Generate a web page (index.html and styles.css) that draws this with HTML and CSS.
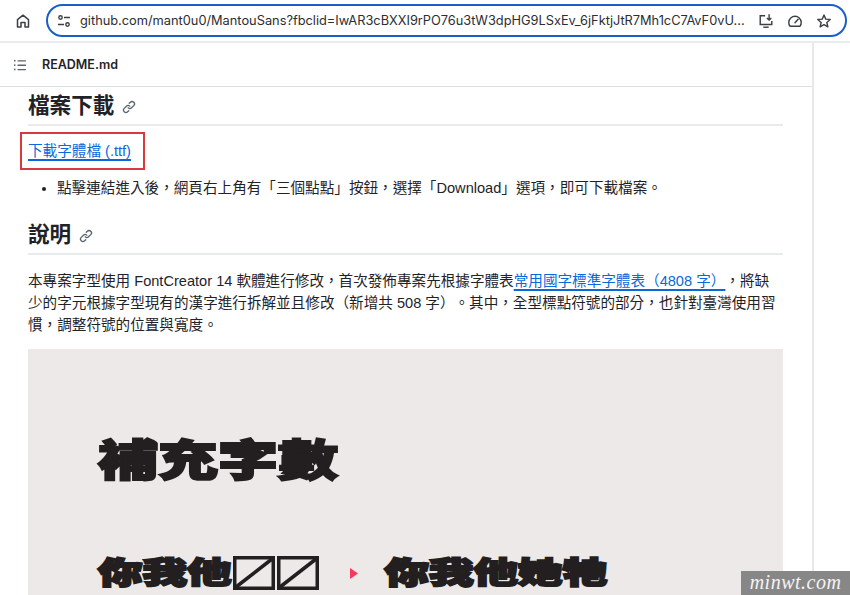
FILE: index.html
```html
<!DOCTYPE html>
<html lang="zh-TW">
<head>
<meta charset="utf-8">
<title>MantouSans</title>
<link rel="stylesheet" href="styles.css">
</head>
<body>
<header class="toolbar">
  <svg class="home" viewBox="0 0 16 16" width="16" height="16"><path d="M2.500 6.600 8 2.200l5.500 4.400V14H10V9.500H6V14H2.500Z" fill="none" stroke="#3c4043" stroke-width="1.500" stroke-linejoin="round"/></svg>
  <div class="omnibox">
    <svg class="tune" viewBox="0 0 16 16" width="16" height="16"><g fill="none" stroke="#3c4043" stroke-width="1.400"><circle cx="4.500" cy="4.500" r="1.700"/><path d="M8 4.500h6M2 11.500h6"/><circle cx="11.500" cy="11.500" r="1.700"/></g></svg>
    <span class="url">github.com/mant0u0/MantouSans?fbclid=IwAR3cBXXI9rPO76u3tW3dpHG9LSxEv_6jFktjJtR7Mh1cC7AvF0vU...</span>
    <svg class="act" viewBox="0 0 18 18" width="16" height="16"><g fill="none" stroke="#3c4043" stroke-width="1.600"><path d="M8 3H2.500v10h13V9"/><path d="M6 16h6"/><path d="M12.500 1.500v6M10 5.500l2.500 2.500L15 5.500"/></g></svg>
    <svg class="act" viewBox="0 0 18 18" width="16" height="16"><g fill="none" stroke="#3c4043" stroke-width="1.600"><path d="M3.500 15A7 7 0 1 1 14.500 15Z" stroke-linejoin="round"/><path d="M9 11l3.500-4" stroke-linecap="round"/></g></svg>
    <svg class="act" viewBox="0 0 18 18" width="16" height="16"><path d="M9 2.300l2 4.600 5 .450-3.800 3.300 1.150 4.900L9 13l-4.350 2.550 1.150-4.900L2 7.350l5-.450Z" fill="none" stroke="#3c4043" stroke-width="1.600" stroke-linejoin="round"/></svg>
  </div>
</header>
<div class="page">
  <main class="readme">
    <div class="readme-head">
      <svg viewBox="0 0 16 16" width="14" height="14"><path fill="#59636e" d="M5.750 2.500h8.500a.75.75 0 0 1 0 1.500h-8.500a.75.75 0 0 1 0-1.500Zm0 5h8.500a.75.75 0 0 1 0 1.500h-8.500a.75.75 0 0 1 0-1.500Zm0 5h8.500a.75.75 0 0 1 0 1.500h-8.500a.75.75 0 0 1 0-1.500ZM2 14a1 1 0 1 1 0-2 1 1 0 0 1 0 2Zm1-6a1 1 0 1 1-2 0 1 1 0 0 1 2 0ZM2 4a1 1 0 1 1 0-2 1 1 0 0 1 0 2Z"/></svg>
      <span class="readme-name">README.md</span>
    </div>
    <article class="body">
      <h2 class="h first">檔案下載 <svg class="anchor" viewBox="0 0 16 16" width="14" height="14"><use href="#link"/></svg></h2>
      <p class="dl"><a class="boxed" href="#">下載字體檔 (.ttf)</a></p>
      <ul class="list"><li>點擊連結進入後，網頁右上角有「三個點點」按鈕，選擇「Download」選項，即可下載檔案。</li></ul>
      <h2 class="h">說明 <svg class="anchor" viewBox="0 0 16 16" width="14" height="14"><use href="#link"/></svg></h2>
      <p class="para">本專案字型使用 FontCreator 14 軟體進行修改，首次發佈專案先根據字體表<a href="#">常用國字標準字體表（4808 字）</a>，將缺少的字元根據字型現有的漢字進行拆解並且修改（新增共 508 字）。其中，全型標點符號的部分，也針對臺灣使用習慣，調整符號的位置與寬度。</p>
      <figure class="poster">
        <div class="poster-title">補充字數</div>
        <div class="poster-row">
          <span class="glyphs">你我他</span>
          <span class="missing"><svg viewBox="0 0 42 34" width="42" height="34"><use href="#tofu"/></svg><svg viewBox="0 0 42 34" width="42" height="34"><use href="#tofu"/></svg></span>
          <svg class="arrow" viewBox="0 0 8 11" width="8" height="11"><path d="M0 0l8 5.500-8 5.500Z" fill="#f43a5f"/></svg>
          <span class="glyphs">你我他她牠</span>
        </div>
      </figure>
    </article>
  </main>
  <aside class="side"></aside>
</div>
<div class="mark">minwt.com</div>
<svg class="defs" width="0" height="0">
  <symbol id="link" viewBox="0 0 16 16"><path fill="#59636e" d="m7.775 3.275 1.250-1.250a3.500 3.500 0 1 1 4.950 4.950l-2.500 2.500a3.500 3.500 0 0 1-4.950 0 .751.751 0 0 1 .018-1.042.751.751 0 0 1 1.042-.018 1.998 1.998 0 0 0 2.830 0l2.500-2.500a2.002 2.002 0 0 0-2.830-2.830l-1.250 1.250a.751.751 0 0 1-1.042-.018.751.751 0 0 1-.018-1.042Zm-4.690 9.640a1.998 1.998 0 0 0 2.830 0l1.250-1.250a.751.751 0 0 1 1.042.018.751.751 0 0 1 .018 1.042l-1.250 1.250a3.500 3.500 0 1 1-4.950-4.950l2.500-2.500a3.500 3.500 0 0 1 4.950 0 .751.751 0 0 1-.018 1.042.751.751 0 0 1-1.042.018 1.998 1.998 0 0 0-2.830 0l-2.500 2.500a1.998 1.998 0 0 0 0 2.830Z"/></symbol>
  <symbol id="tofu" viewBox="0 0 42 34"><g fill="none" stroke="#231f20" stroke-width="3.500"><rect x="1.750" y="1.750" width="38.500" height="30.500"/><path d="M3 31L39 3"/></g></symbol>
</svg>
</body>
</html>
```

FILE: styles.css
```css
* { box-sizing: border-box; }
html, body { margin: 0; height: 595px; overflow: hidden; }
body {
  position: relative;
  background: #fff;
  color: #1f2328;
  font-family: "Liberation Sans", "Noto Sans CJK TC", sans-serif;
  font-size: 14.6px;
  text-spacing-trim: space-all;
  display: flex;
  flex-direction: column;
}
.toolbar {
  height: 43px;
  flex: none;
  display: flex;
  align-items: center;
  padding: 0 8px 0 15px;
  gap: 15px;
  background: #fff;
  border-bottom: 2px solid #e9ebee;
}
.home { flex: none; }
.omnibox {
  flex: 1;
  height: 33px;
  display: flex;
  align-items: center;
  border: 2px solid #1a5fc8;
  border-radius: 17px;
  padding: 0 13px 0 8px;
}
.url {
  flex: 1;
  margin-left: 8px;
  white-space: nowrap;
  overflow: hidden;
  font-family: "Inter", sans-serif;
  font-size: 12.8px;
  color: #2b2e33;
}
.act { flex: none; margin-left: 13px; }
.page { flex: 1; display: flex; min-height: 0; }
.readme { width: 814px; flex: none; border-right: 2px solid #e6e8ec; overflow: hidden; }
.readme-head {
  height: 44px;
  display: flex;
  align-items: center;
  gap: 15px;
  padding-left: 13px;
  border-bottom: 1px solid #dde1e6;
}
.readme-name { font-size: 12.5px; font-weight: 600; font-family: "Inter", sans-serif; color: #1f2328; }
.body { padding: 0 29px 0 28px; }
.h {
  margin: 17px 0 0;
  font-size: 21.6px;
  line-height: 27px;
  font-weight: 700;
  padding: 5px 0;
  border-bottom: 2px solid #e8eaee;
  display: flex;
  align-items: center;
  gap: 2px;
  white-space: pre;
}
.h.first { margin-top: 0; }
.anchor { flex: none; margin-top: 3px; }
.dl { margin: 6px 0 0 -8px; }
.boxed {
  display: inline-block;
  padding: 5px 12px 3px 6px;
  height: 38px;
  line-height: 24px;
  border: 2px solid #d8393c;
}
a {
  color: #0969da;
  text-decoration: underline;
  text-decoration-thickness: 1.5px;
  text-underline-offset: 3px;
}
.list { margin: 7px 0 0; padding: 0 0 0 29px; line-height: 22px; }
.para { margin: 15px 0 0; line-height: 22px; }
.poster { margin: 13px 0 0; height: 300px; background: #eee9e9; padding: 78px 0 0 70px; }
.poster-title, .glyphs {
  color: #231f20;
  font-weight: 900;
  -webkit-text-stroke: 3px #231f20;
  white-space: nowrap;
}
.poster-title { font-size: 60px; line-height: 70px; transform: scaleY(0.72); }
.poster-row { display: flex; align-items: center; margin-top: 51px; height: 50px; }
.glyphs { font-size: 44.5px; line-height: 50px; transform: scaleY(0.66); }
.missing { display: flex; gap: 2px; margin-left: 1px; }
.arrow { margin: 0 27px 0 31px; }
.side { flex: 1; }
.mark {
  position: absolute;
  right: 0;
  bottom: 0;
  width: 109px;
  height: 24px;
  background: #888787;
  color: #f4f4f4;
  font-family: "Liberation Serif", serif;
  font-style: italic;
  font-size: 20px;
  line-height: 23px;
  text-align: center;
  letter-spacing: 0.5px;
}
.defs { position: absolute; }
```
